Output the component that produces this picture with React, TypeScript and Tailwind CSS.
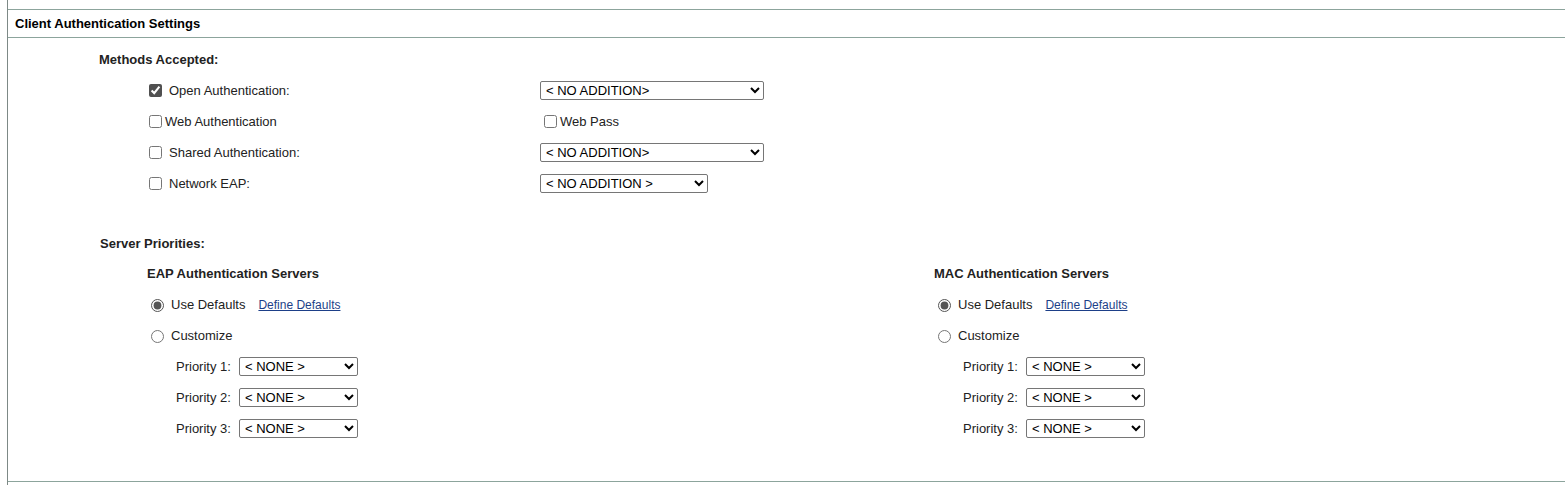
import React from 'react';

const font = { fontFamily: '"Liberation Sans", Arial, sans-serif' };

const Select: React.FC<{ value: string; width: string }> = ({ value, width }) => (
    <select
        defaultValue={value}
        className={`${width} h-[19px] text-[13px] leading-none text-black bg-white border border-[#767676] rounded-[2px] pl-[1px] accent-[#505050]`}
        style={font}
    >
        <option value={value}>{value}</option>
    </select>
);

const MethodRow: React.FC<{ label: string; checked?: boolean; tight?: boolean; children: React.ReactNode }> = ({
    label,
    checked,
    tight,
    children,
}) => (
    <div className="flex items-center h-[31px]">
        <div className="w-[532px] pl-[141px] flex items-center shrink-0">
            <input
                type="checkbox"
                defaultChecked={checked}
                className="w-[13px] h-[13px] m-0 accent-[#505050]"
            />
            <span className={tight ? 'ml-[3px]' : 'ml-[7px]'}>{label}</span>
        </div>
        {children}
    </div>
);

const ServerColumn: React.FC<{ title: string; name: string }> = ({ title, name }) => (
    <div className="flex flex-col">
        <div className="h-[30px] flex items-center font-bold">{title}</div>
        <div className="h-[32px] flex items-center pl-[4px]">
            <input type="radio" name={name} defaultChecked className="w-[13px] h-[13px] m-0 accent-[#555]" />
            <span className="ml-[7px]">Use Defaults</span>
            <a href="#" className="ml-[13px] text-[12px] text-[#1d3f88] underline">
                Define Defaults
            </a>
        </div>
        <div className="h-[30px] flex items-center pl-[4px]">
            <input type="radio" name={name} className="w-[13px] h-[13px] m-0 accent-[#555]" />
            <span className="ml-[7px]">Customize</span>
        </div>
        {[1, 2, 3].map((n) => (
            <div key={n} className="h-[31px] flex items-center pl-[29px]">
                <span className="w-[63px]">Priority {n}:</span>
                <Select value="< NONE >" width="w-[119px]" />
            </div>
        ))}
    </div>
);

export default function App() {
    return (
        <div className="w-[1565px] h-[485px] bg-white text-[13px] text-[#222] overflow-hidden" style={font}>
            <div className="ml-[7px] h-full border-l-[1.5px] border-[#7d8986] pt-[9px]">
                <div className="h-[29px] border-t border-b border-[#8ca49c] flex items-center pl-[7px] font-bold text-black">
                    Client Authentication Settings
                </div>
                <div className="pt-[7px]">
                    <div className="h-[30px] flex items-center pl-[91px] font-bold">Methods Accepted:</div>
                    <MethodRow label="Open Authentication:" checked>
                        <Select value="< NO ADDITION>" width="w-[224px]" />
                    </MethodRow>
                    <MethodRow label="Web Authentication" tight>
                        <div className="flex items-center pl-[4px]">
                            <input type="checkbox" className="w-[13px] h-[13px] m-0 accent-[#505050]" />
                            <span className="ml-[3px]">Web Pass</span>
                        </div>
                    </MethodRow>
                    <MethodRow label="Shared Authentication:">
                        <Select value="< NO ADDITION>" width="w-[224px]" />
                    </MethodRow>
                    <MethodRow label="Network EAP:">
                        <Select value="< NO ADDITION >" width="w-[168px]" />
                    </MethodRow>

                    <div className="mt-[30px] h-[30px] flex items-center pl-[92px] font-bold">Server Priorities:</div>
                    <div className="flex pl-[139px] h-[186px]">
                        <div className="w-[787px] shrink-0">
                            <ServerColumn title="EAP Authentication Servers" name="eap" />
                        </div>
                        <ServerColumn title="MAC Authentication Servers" name="mac" />
                    </div>
                    <div className="mt-[36px] border-t border-[#8ca49c]" />
                </div>
            </div>
        </div>
    );
}
